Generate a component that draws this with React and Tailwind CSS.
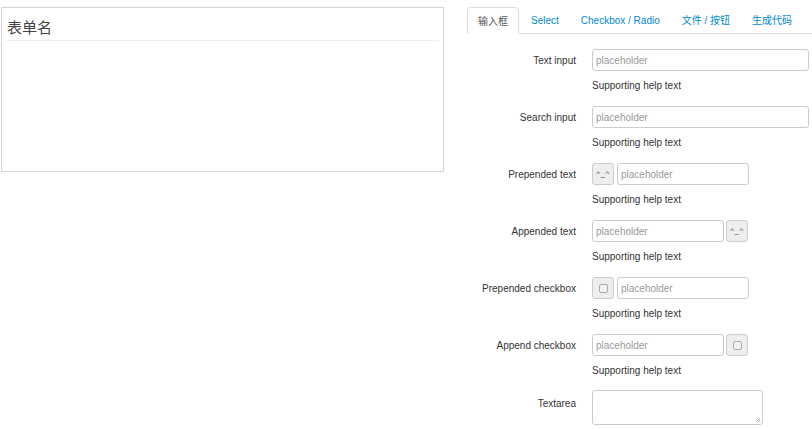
const tabs = ['输入框', 'Select', 'Checkbox / Radio', '文件 / 按钮', '生成代码']

function Field({ label, children, help = true, top = false }) {
  return (
    <div className="flex">
      <div className={`w-[109px] text-right text-[#333] ${top ? 'pt-[6px] leading-[14px]' : 'h-[22px] pt-[1px] leading-[22px]'}`}>{label}</div>
      <div className="ml-[16px]">
        {children}
        {help && <div className="mt-[8px] mb-[13px] h-[14px] leading-[14px] text-[#333]">Supporting help text</div>}
      </div>
    </div>
  )
}

function Input({ w }) {
  return (
    <div className={`h-[22px] ${w} border border-[#ccc] rounded-[3px] bg-white px-[3px] pt-[1px] leading-[20px] text-[#999]`}>placeholder</div>
  )
}

function Addon({ children }) {
  return (
    <div className="h-[22px] w-[22px] flex items-center justify-center border border-[#ccc] rounded-[3px] bg-[#eee]">{children}</div>
  )
}

const Face = () => <span className="text-[8px] leading-none text-[#444] tracking-[0.5px]">^_^</span>
const Box = () => <span className="block w-[9px] h-[9px] border border-[#aaa] rounded-[2px] bg-[#f2f2f2]" />

export default function App() {
  return (
    <div className="flex pt-[7px] bg-white w-[812px] h-[429px] overflow-hidden text-[10px]" style={{ fontFamily: '"Liberation Sans", Arial, "Noto Sans CJK SC", sans-serif' }}>
      <div className="ml-[1px] w-[443px] h-[165px] border border-[#d4d4d4] shrink-0">
        <div className="pl-[5px] pt-[10px] h-[32px] text-[15px] leading-[20px] text-[#444]">表单名</div>
        <div className="mx-[4px] border-t border-[#eee]" />
      </div>
      <div className="ml-[23px] flex-1">
        <div className="flex border-b border-[#ddd] h-[27px]">
          {tabs.map((t, i) => (
            <div key={t} className={`px-[10px] mr-[2px] h-[27px] leading-[28px] rounded-t-[4px] ${i === 0 ? 'border border-[#ddd] border-b-white bg-white text-[#555] px-[9px]' : 'text-[#0088cc]'}`}>{t}</div>
          ))}
        </div>
        <div className="pt-[15px]">
          <Field label="Text input"><Input w="w-[217px]" /></Field>
          <Field label="Search input"><Input w="w-[217px]" /></Field>
          <Field label="Prepended text">
            <div className="flex gap-[3px]"><Addon><Face /></Addon><Input w="w-[132px]" /></div>
          </Field>
          <Field label="Appended text">
            <div className="flex gap-[2px]"><Input w="w-[132px]" /><Addon><Face /></Addon></div>
          </Field>
          <Field label="Prepended checkbox">
            <div className="flex gap-[3px]"><Addon><Box /></Addon><Input w="w-[132px]" /></div>
          </Field>
          <Field label="Append checkbox">
            <div className="flex gap-[2px]"><Input w="w-[132px]" /><Addon><Box /></Addon></div>
          </Field>
          <Field label="Textarea" help={false} top>
            <div className="-mt-[1px] w-[171px] h-[35px] border border-[#ccc] rounded-[3px] bg-white relative">
              <svg className="absolute right-[1px] bottom-[1px]" width="6" height="6" viewBox="0 0 6 6">
                <path d="M1 5L5 1M3 5L5 3" stroke="#999" strokeWidth="0.8" />
              </svg>
            </div>
          </Field>
        </div>
      </div>
    </div>
  )
}
